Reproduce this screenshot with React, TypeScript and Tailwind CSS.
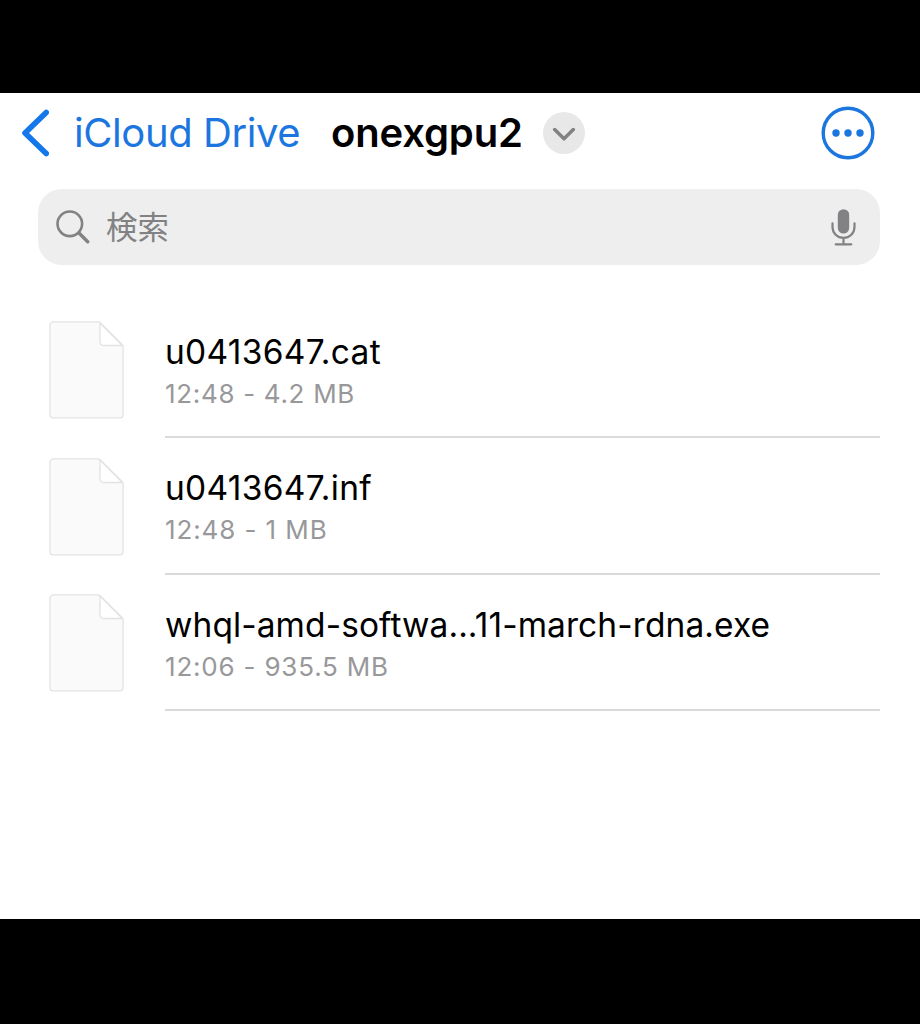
type FileItem = {
  name: string;
  time: string;
  size: string;
  nameClass: string;
  metaClass: string;
};

const files: FileItem[] = [
  { name: "u0413647.cat", time: "12:48", size: "4.2 MB", nameClass: "tracking-[0.3px]", metaClass: "tracking-[0.68px]" },
  { name: "u0413647.inf", time: "12:48", size: "1 MB", nameClass: "tracking-[0.3px]", metaClass: "tracking-[0.9px]" },
  {
    name: "whql-amd-softwa...11-march-rdna.exe",
    time: "12:06",
    size: "935.5 MB",
    nameClass: "tracking-[0.09px]",
    metaClass: "tracking-[0.8px]",
  },
];

function BackIcon() {
  return (
    <svg width="28" height="48" viewBox="0 0 28 48" fill="none">
      <path d="M25.2 3.4 4 24l21.2 20.6" stroke="#1477ea" strokeWidth="5.6" strokeLinecap="round" strokeLinejoin="round" />
    </svg>
  );
}

function MoreIcon() {
  return (
    <svg width="54" height="54" viewBox="0 0 54 54" fill="none">
      <circle cx="27" cy="27" r="24.8" stroke="#1c76e0" strokeWidth="3.4" />
      <circle cx="15" cy="27" r="3.7" fill="#1c76e0" />
      <circle cx="27" cy="27" r="3.7" fill="#1c76e0" />
      <circle cx="39" cy="27" r="3.7" fill="#1c76e0" />
    </svg>
  );
}

function SearchIcon() {
  return (
    <svg width="34" height="34" viewBox="0 0 34 34" fill="none" stroke="#828285" strokeLinecap="round">
      <circle cx="13.8" cy="13.8" r="12.3" strokeWidth="2.6" />
      <path d="m23 23 8.7 8.7" strokeWidth="3.4" />
    </svg>
  );
}

function MicIcon() {
  return (
    <svg width="26" height="38" viewBox="0 0 26 38" fill="none">
      <rect x="6.8" y="1.2" width="11.4" height="24.4" rx="5.7" fill="#828285" />
      <path
        d="M1.5 15.3v3.6a11 11 0 0 0 22 0v-3.600M12.500 30v6M4.700 36.300h15.600"
        stroke="#828285"
        strokeWidth="2.2"
        strokeLinecap="round"
      />
    </svg>
  );
}

function FileIcon() {
  return (
    <svg width="75" height="98" viewBox="0 0 75 98" fill="#fafafa" stroke="#e3e3e3" strokeWidth="1.3">
      <path d="M4.300.9h44.200c1.300 0 2.300.4 3.200 1.300l20.900 20.700c1 1 1.500 2 1.500 3.400V93.500a3.400 3.400 0 0 1-3.400 3.400H4.300A3.400 3.400 0 0 1 .9 93.500V4.300A3.400 3.400 0 0 1 4.300.9Z" />
      <path d="M51 2v18.500c0 2.600 1.300 4 4 4h18.300Z" fill="#fff" />
    </svg>
  );
}

function FileRow({ file }: { file: FileItem }) {
  return (
    <li className="flex h-[136.5px] pl-[49px] pr-10">
      <div className="w-[116px] shrink-0 pt-[19.5px]">
        <FileIcon />
      </div>
      <div className="flex-1 whitespace-nowrap border-b-2 border-[#dadadb] pt-[29px]">
        <p className="text-[33.5px] leading-[42px] text-black">
          <span className={file.nameClass}>{file.name}</span>
        </p>
        <p className="text-[26px] leading-[41px] text-[#98989b]">
          <span className={file.metaClass}>
            {file.time} - {file.size}
          </span>
        </p>
      </div>
    </li>
  );
}

export default function App() {
  return (
    <div className="flex h-[1024px] w-[920px] flex-col bg-black pt-[93px] font-['Inter','Noto_Sans_CJK_JP',sans-serif]">
      <main className="h-[826px] bg-white">
        <header className="flex h-20 items-center pl-[21px] pr-[45px]">
          <button className="flex items-center gap-[25px]">
            <BackIcon />
            <span className="w-[257px] whitespace-nowrap text-left text-[40px] leading-[48px] tracking-[-0.42px] text-[#1c76e0]">
              iCloud Drive
            </span>
          </button>
          <h1 className="w-[212px] text-[40px] font-semibold leading-[48px] tracking-[-0.15px] text-black">onexgpu2</h1>
          <button className="flex size-[42px] items-center justify-center rounded-full bg-[#e8e8e9]">
            <svg width="24" height="16" viewBox="0 0 24 16" fill="none">
              <path d="M2.700 4.500 12 13.800l9.300-9.300" stroke="#828285" strokeWidth="3.5" strokeLinecap="round" strokeLinejoin="round" />
            </svg>
          </button>
          <button className="ml-auto">
            <MoreIcon />
          </button>
        </header>

        <div className="mx-[38px] mt-4 flex h-[76px] w-[842px] items-center rounded-[24px] bg-[#eeeeee] pl-[18px] pr-[23px]">
          <SearchIcon />
          <span className="ml-[16px] pt-0.5 text-[31.5px] leading-[40px] text-[#828285]">検索</span>
          <span className="ml-auto">
            <MicIcon />
          </span>
        </div>

        <ul className="mt-[36.5px]">
          {files.map((file) => (
            <FileRow key={file.name} file={file} />
          ))}
        </ul>
      </main>
    </div>
  );
}
